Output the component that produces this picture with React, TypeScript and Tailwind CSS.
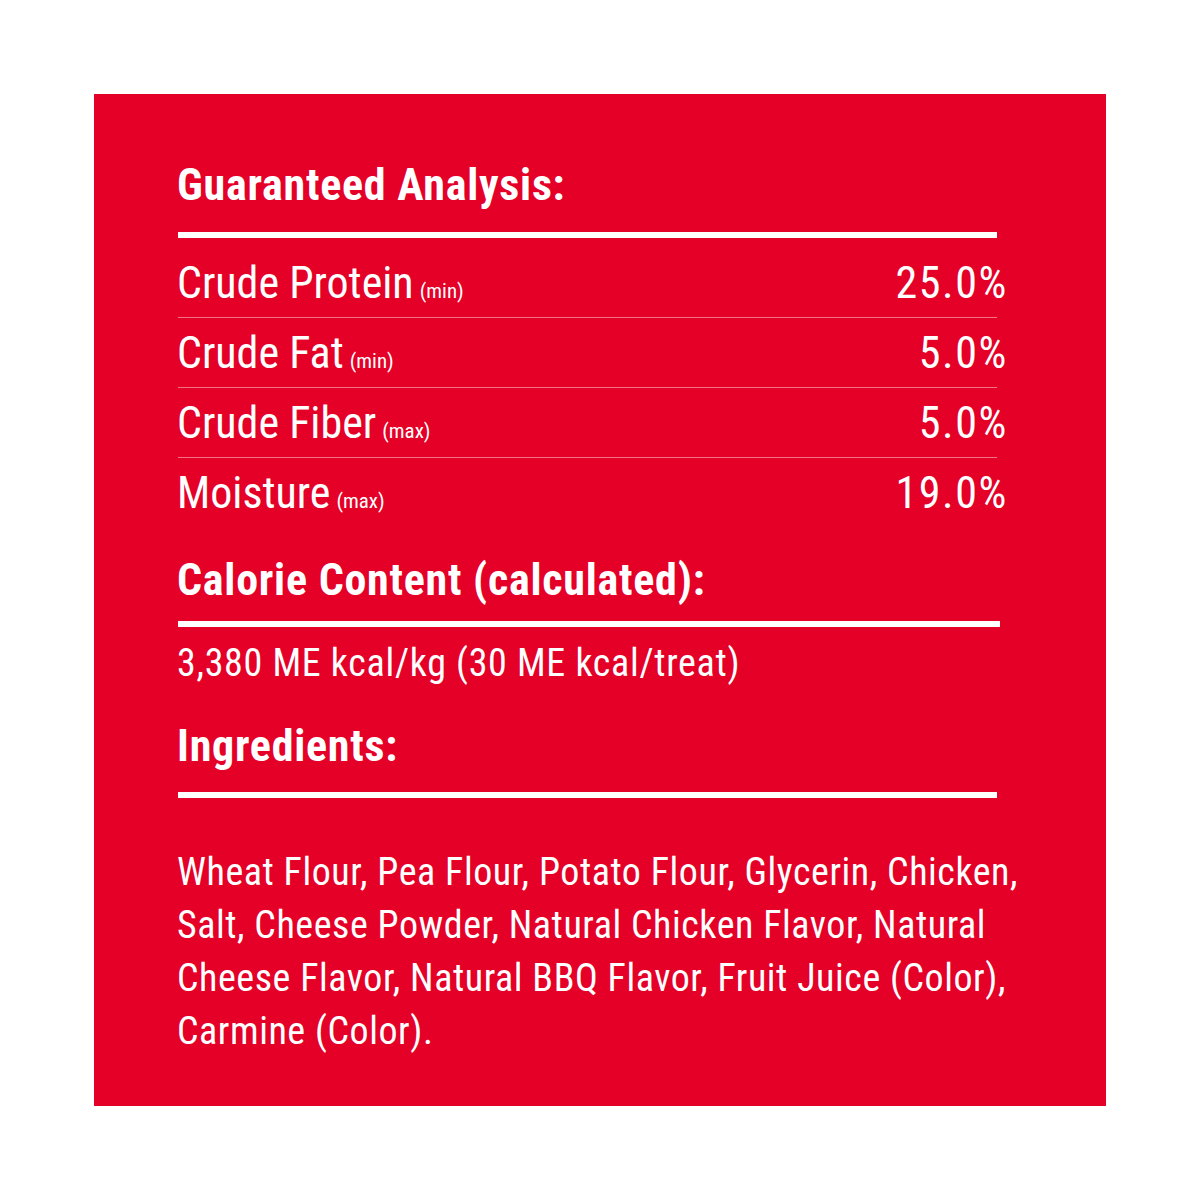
const rows = [
  { label: "Crude Protein", note: "(min)", value: "25.0%" },
  { label: "Crude Fat", note: "(min)", value: "5.0%" },
  { label: "Crude Fiber", note: "(max)", value: "5.0%" },
  { label: "Moisture", note: "(max)", value: "19.0%" },
];

export default function App() {
  return (
    <div className="w-[1200px] h-[1200px] bg-white pt-[94px] pl-[94px] font-['Roboto_Condensed','Roboto',sans-serif]">
      <div className="w-[1012px] h-[1012px] bg-[#e50027] text-white pl-[83px] pt-[69px] flex flex-col items-start">
        {/* Guaranteed analysis */}
        <h2 className="text-[44px] font-bold leading-none tracking-[0.75px]">Guaranteed Analysis:</h2>
        <div className="mt-[25px] ml-px h-1.5 w-[819px] bg-white" />

        <div className="mt-[23px] w-[829px] flex flex-col">
          {rows.map((row, i) => (
            <div key={row.label}>
              <div className="flex items-baseline justify-between text-[44px] leading-none h-[44px]">
                <span>
                  {row.label}
                  <span className="ml-[6px] text-[21px]">{row.note}</span>
                </span>
                <span className="tracking-[1.6px] -mr-[2px]">{row.value}</span>
              </div>
              {i < rows.length - 1 && (
                <div className="mt-[12px] mb-[13px] ml-px h-px w-[819px] bg-white/45" />
              )}
            </div>
          ))}
        </div>

        {/* Calorie content */}
        <h2 className="mt-[43px] text-[44px] font-bold leading-none tracking-[0.75px]">Calorie Content (calculated):</h2>
        <div className="mt-[19px] ml-px h-1.5 w-[822px] bg-white" />
        <p className="mt-[17px] text-[38px] leading-none tracking-[0.7px]">3,380 ME kcal/kg (30 ME kcal/treat)</p>

        {/* Ingredients */}
        <h2 className="mt-[42px] text-[44px] font-bold leading-none tracking-[0.75px]">Ingredients:</h2>
        <div className="mt-[24px] ml-px h-1.5 w-[819px] bg-white" />
        <p className="mt-[48px] whitespace-nowrap text-[38px] leading-[53px] tracking-[0.55px]">
          Wheat Flour, Pea Flour, Potato Flour, Glycerin, Chicken,
          <br />
          Salt, Cheese Powder, Natural Chicken Flavor, Natural
          <br />
          Cheese Flavor, Natural BBQ Flavor, Fruit Juice (Color),
          <br />
          Carmine (Color).
        </p>
      </div>
    </div>
  );
}
